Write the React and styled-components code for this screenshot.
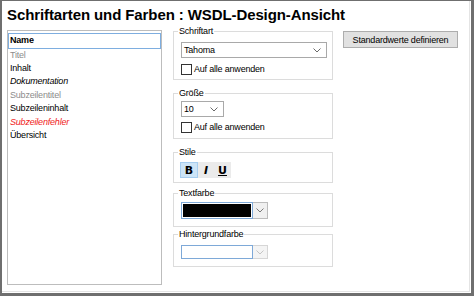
import React from 'react'
import styled, { createGlobalStyle } from 'styled-components'

const GlobalStyle = createGlobalStyle`
  html, body {
    margin: 0;
    padding: 0;
    background: #ffffff;
  }
  body {
    font-family: "Liberation Sans", Arial, sans-serif;
  }
`

const Frame = styled.div`
  width: 474px;
  height: 296px;
  box-sizing: border-box;
  border-style: solid;
  border-color: #6f6f6f;
  border-width: 1px 3px 3px 2px;
  box-shadow: inset -1px -1px 0 #ffffff, inset -2px -2px 0 #e4e4e4;
  padding: 5px 0 0 5px;
  font-size: 9px;
  letter-spacing: -0.2px;
  color: #000;
`

const Title = styled.div`
  font-size: 15px;
  line-height: 18px;
  font-weight: bold;
  letter-spacing: -0.1px;
  margin-left: 0;
  margin-bottom: 1px;
  white-space: nowrap;
`

const Body = styled.div`
  display: flex;
  align-items: flex-start;
`

const List = styled.div`
  width: 155px;
  height: 255px;
  box-sizing: border-box;
  margin-top: 5px;
  border: 1px solid #bdbdbd;
  padding-top: 2px;
`

const Item = styled.div`
  height: ${p => (p.$selected ? '15.5px' : '13.45px')};
  line-height: ${p => (p.$selected ? '13.5px' : '13.45px')};
  box-sizing: border-box;
  padding-left: ${p => (p.$selected ? '1px' : '2px')};
  border: ${p => (p.$selected ? '1px solid #7eaee0' : 'none')};
  font-weight: ${p => (p.$bold ? 'bold' : 'normal')};
  font-style: ${p => (p.$italic ? 'italic' : 'normal')};
  color: ${p => p.$color || '#000'};
  white-space: nowrap;
`

const Middle = styled.div`
  width: 160px;
  margin-left: 11px;
  display: flex;
  flex-direction: column;
`

const Group = styled.fieldset`
  margin: ${p => p.$mt || 0}px 0 0 0;
  min-width: 0;
  border: 1px solid #dcdcdc;
  padding: ${p => p.$pt || 0}px 4px ${p => p.$pb || 0}px 7px;
  display: flex;
  flex-direction: column;
  align-items: flex-start;
  gap: ${p => p.$gap || 0}px;
`

const Legend = styled.legend`
  font-size: 9px;
  line-height: 12px;
  padding: 0 1px;
  margin-left: -3px;
  color: #000;
`

const Combo = styled.div`
  width: ${p => p.$w}px;
  height: 16px;
  box-sizing: border-box;
  border: 1px solid #a9a9a9;
  background: #fff;
  display: flex;
  align-items: center;
  justify-content: space-between;
  padding: 0 5px 0 2px;
  line-height: 14px;
`

const Check = styled.label`
  display: flex;
  align-items: center;
  height: 11px;
  line-height: 11px;
  gap: 2px;
`

const Box = styled.span`
  width: 11px;
  height: 11px;
  box-sizing: border-box;
  border: 1px solid #333333;
  background: #fff;
`

const Toolbar = styled.div`
  display: flex;
  background: #ebebeb;
  height: 16px;
  margin-left: -1px;
`

const ToolButton = styled.div`
  width: ${p => p.$w || 16}px;
  height: 16px;
  box-sizing: border-box;
  display: flex;
  align-items: center;
  justify-content: center;
  border: 1px solid ${p => (p.$active ? '#a6cdef' : 'transparent')};
  background: ${p => (p.$active ? '#cce4f7' : 'transparent')};
  font-size: 11px;
  font-weight: bold;
  letter-spacing: 0;
  font-style: ${p => (p.$italic ? 'italic' : 'normal')};
  text-decoration: ${p => (p.$underline ? 'underline' : 'none')};
  font-family: "DejaVu Sans", "Liberation Sans", sans-serif;
`

const ColorCombo = styled.div`
  display: flex;
  height: ${p => p.$h}px;
`

const Swatch = styled.div`
  width: 72px;
  box-sizing: border-box;
  border: 1px solid #7ea9d8;
  padding: 1px;
  background: #fff;
  display: flex;
  & > span {
    flex: 1;
    background: ${p => p.$fill};
  }
`

const DropBtn = styled.div`
  width: 15px;
  box-sizing: border-box;
  border: 1px solid ${p => (p.$disabled ? '#d6d6d6' : '#bcbcbc')};
  border-left: none;
  background: ${p => (p.$disabled ? '#f4f4f4' : '#f0f0f0')};
  display: flex;
  align-items: center;
  justify-content: center;
  color: ${p => (p.$disabled ? '#c4c4c4' : '#7a7a7a')};
`

const Right = styled.div`
  margin-left: 10px;
  margin-top: 6px;
`

const Button = styled.div`
  width: 115px;
  height: 17px;
  box-sizing: border-box;
  border: 1px solid #adadad;
  background: #e1e1e1;
  display: flex;
  align-items: center;
  justify-content: center;
  white-space: nowrap;
`

const Chevron = ({ color = '#6a6a6a' }) => (
  <svg width="8" height="5" viewBox="0 0 8 5">
    <polyline points="0.5,0.5 4,4 7.5,0.5" fill="none" stroke={color} strokeWidth="1" />
  </svg>
)

const items = [
  { text: 'Name', bold: true, selected: true },
  { text: 'Titel', color: '#8c8c8c' },
  { text: 'Inhalt' },
  { text: 'Dokumentation', italic: true },
  { text: 'Subzeilentitel', color: '#8c8c8c' },
  { text: 'Subzeileninhalt' },
  { text: 'Subzeilenfehler', italic: true, color: '#f01c1c' },
  { text: 'Übersicht' },
]

export default function App() {
  return (
    <>
      <GlobalStyle />
      <Frame>
        <Title>Schriftarten und Farben : WSDL-Design-Ansicht</Title>
        <Body>
          <List>
            {items.map((item, index) => (
              <Item
                key={index}
                $selected={item.selected}
                $bold={item.bold}
                $italic={item.italic}
                $color={item.color}
              >
                {item.text}
              </Item>
            ))}
          </List>

          <Middle>
            <Group $pt={5} $pb={4} $gap={6}>
              <Legend>Schriftart</Legend>
              <Combo $w={146}>
                <span>Tahoma</span>
                <Chevron />
              </Combo>
              <Check><Box />Auf alle anwenden</Check>
            </Group>

            <Group $mt={7} $pt={2} $pb={5} $gap={5}>
              <Legend>Größe</Legend>
              <Combo $w={43}>
                <span>10</span>
                <Chevron />
              </Combo>
              <Check><Box />Auf alle anwenden</Check>
            </Group>

            <Group $mt={7} $pt={4} $pb={4}>
              <Legend>Stile</Legend>
              <Toolbar>
                <ToolButton $active $w={18}>B</ToolButton>
                <ToolButton $italic>I</ToolButton>
                <ToolButton $underline $w={17}>U</ToolButton>
              </Toolbar>
            </Group>

            <Group $mt={4} $pt={3} $pb={7}>
              <Legend>Textfarbe</Legend>
              <ColorCombo $h={17}>
                <Swatch $fill="#000000"><span /></Swatch>
                <DropBtn><Chevron color="#7a7a7a" /></DropBtn>
              </ColorCombo>
            </Group>

            <Group $mt={1} $pt={5} $pb={7}>
              <Legend>Hintergrundfarbe</Legend>
              <ColorCombo $h={14}>
                <Swatch $fill="#ffffff"><span /></Swatch>
                <DropBtn $disabled><Chevron color="#c4c4c4" /></DropBtn>
              </ColorCombo>
            </Group>
          </Middle>

          <Right>
            <Button>Standardwerte definieren</Button>
          </Right>
        </Body>
      </Frame>
    </>
  )
}
